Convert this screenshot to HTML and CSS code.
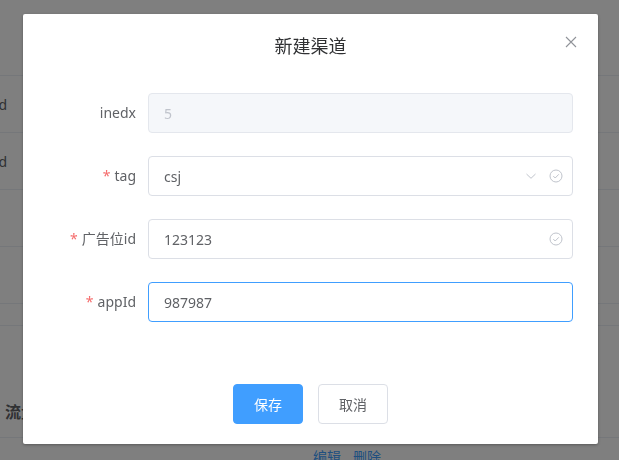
FILE: index.html
```html
<!DOCTYPE html>
<html lang="zh-CN">
<head>
<meta charset="utf-8">
<title>新建渠道</title>
<link rel="stylesheet" href="styles.css">
</head>
<body>
<div class="page">
  <div class="row row-head"></div>
  <div class="row"><span class="cell">广告位id</span></div>
  <div class="row"><span class="cell">广告位id</span></div>
  <div class="row"></div>
  <div class="row"></div>
  <div class="row row-thin"></div>
  <div class="row row-section"><span class="section-title">流量配置</span></div>
  <div class="row row-links"><span class="links"><a class="link">编辑</a><a class="link">删除</a></span></div>
</div>

<div class="mask"></div>

<div class="dialog">
  <div class="dialog-header">
    <span class="dialog-title">新建渠道</span>
    <svg class="close" width="12" height="12" viewBox="0 0 12 12"><path d="M1 1L11 11M11 1L1 11" stroke="#909399" stroke-width="1.1" fill="none"/></svg>
  </div>
  <div class="dialog-body">
    <div class="form-item">
      <label class="label">inedx</label>
      <div class="input disabled"><span class="value">5</span></div>
    </div>
    <div class="form-item">
      <label class="label"><span class="star">*</span>tag</label>
      <div class="input"><span class="value">csj</span>
        <span class="suffix">
          <svg width="12" height="12" viewBox="0 0 12 12"><path d="M1.5 4L6 8.3L10.5 4" stroke="#c0c4cc" stroke-width="1" fill="none"/></svg>
          <svg width="14" height="14" viewBox="0 0 14 14"><circle cx="7" cy="7" r="6" stroke="#c0c4cc" stroke-width="1" fill="none"/><path d="M4.3 7.1L6.2 9L9.8 5.3" stroke="#c0c4cc" stroke-width="1" fill="none"/></svg>
        </span>
      </div>
    </div>
    <div class="form-item">
      <label class="label"><span class="star">*</span>广告位id</label>
      <div class="input"><span class="value">123123</span>
        <span class="suffix">
          <svg width="14" height="14" viewBox="0 0 14 14"><circle cx="7" cy="7" r="6" stroke="#c0c4cc" stroke-width="1" fill="none"/><path d="M4.3 7.1L6.2 9L9.8 5.3" stroke="#c0c4cc" stroke-width="1" fill="none"/></svg>
        </span>
      </div>
    </div>
    <div class="form-item">
      <label class="label"><span class="star">*</span>appId</label>
      <div class="input focus"><span class="value">987987</span></div>
    </div>
  </div>
  <div class="dialog-footer">
    <button class="btn primary">保存</button>
    <button class="btn">取消</button>
  </div>
</div>
</body>
</html>
```
FILE: styles.css
```css
* { box-sizing: border-box; }
html, body { margin: 0; padding: 0; }
body {
  width: 619px;
  height: 460px;
  overflow: hidden;
  background: #fff;
  font-family: "Noto Sans", "Noto Sans CJK SC", sans-serif;
  font-size: 14px;
  color: #606266;
}
.page {
  display: flex;
  flex-direction: column;
  margin-left: -100px;
  width: 800px;
}
.row {
  height: 57px;
  border-bottom: 1px solid #ebeef5;
  display: flex;
  align-items: center;
}
.row-head { height: 76px; }
.row-thin { height: 22px; }
.row-section { height: 112px; align-items: flex-end; padding-bottom: 14px; }
.row-links { height: 40px; align-items: flex-start; padding-top: 8px; }
.cell {
  width: 107px;
  text-align: right;
  color: #606266;
  font-size: 14px;
}
.section-title {
  margin-left: 105px;
  font-size: 16px;
  font-weight: bold;
  color: #606266;
}
.links { margin-left: 413px; display: flex; gap: 12px; }
.link { color: #409eff; font-size: 14px; }

.mask {
  position: fixed;
  inset: 0;
  background: rgba(0, 0, 0, 0.5);
}

.dialog {
  position: absolute;
  left: 23px;
  top: 14px;
  width: 575px;
  background: #fff;
  border-radius: 2px;
  box-shadow: 0 1px 3px rgba(0, 0, 0, 0.3);
}
.dialog-header {
  position: relative;
  padding: 20px 20px 10px;
  text-align: center;
  height: 54px;
}
.dialog-title {
  font-size: 18px;
  line-height: 24px;
  color: #303133;
}
.close {
  position: absolute;
  right: 21px;
  top: 22px;
}
.dialog-body {
  padding: 25px 25px 29px 20px;
}
.form-item {
  display: flex;
  align-items: center;
  margin-bottom: 23px;
  height: 40px;
}
.label {
  width: 105px;
  padding-right: 12px;
  text-align: right;
  font-size: 14px;
  line-height: 40px;
  color: #606266;
}
.star {
  color: #f56c6c;
  margin-right: 4px;
}
.input {
  flex: 1;
  height: 40px;
  border: 1px solid #dcdfe6;
  border-radius: 4px;
  padding: 0 15px;
  display: flex;
  align-items: center;
  justify-content: space-between;
  color: #606266;
  background: #fff;
}
.input.disabled {
  background: #f5f7fa;
  border-color: #e4e7ed;
  color: #c0c4cc;
}
.input.focus { border-color: #409eff; }
.suffix {
  display: flex;
  align-items: center;
  gap: 12px;
  margin-right: -6px;
}
.suffix svg { display: block; }
.dialog-footer {
  padding: 10px 20px 20px;
  display: flex;
  justify-content: center;
  gap: 15px;
}
.btn {
  height: 40px;
  width: 70px;
  border: 1px solid #dcdfe6;
  border-radius: 4px;
  background: #fff;
  color: #606266;
  font-family: "Noto Sans CJK SC", sans-serif;
  font-size: 14px;
  padding: 0;
}
.btn.primary {
  background: #409eff;
  border-color: #409eff;
  color: #fff;
}
```
